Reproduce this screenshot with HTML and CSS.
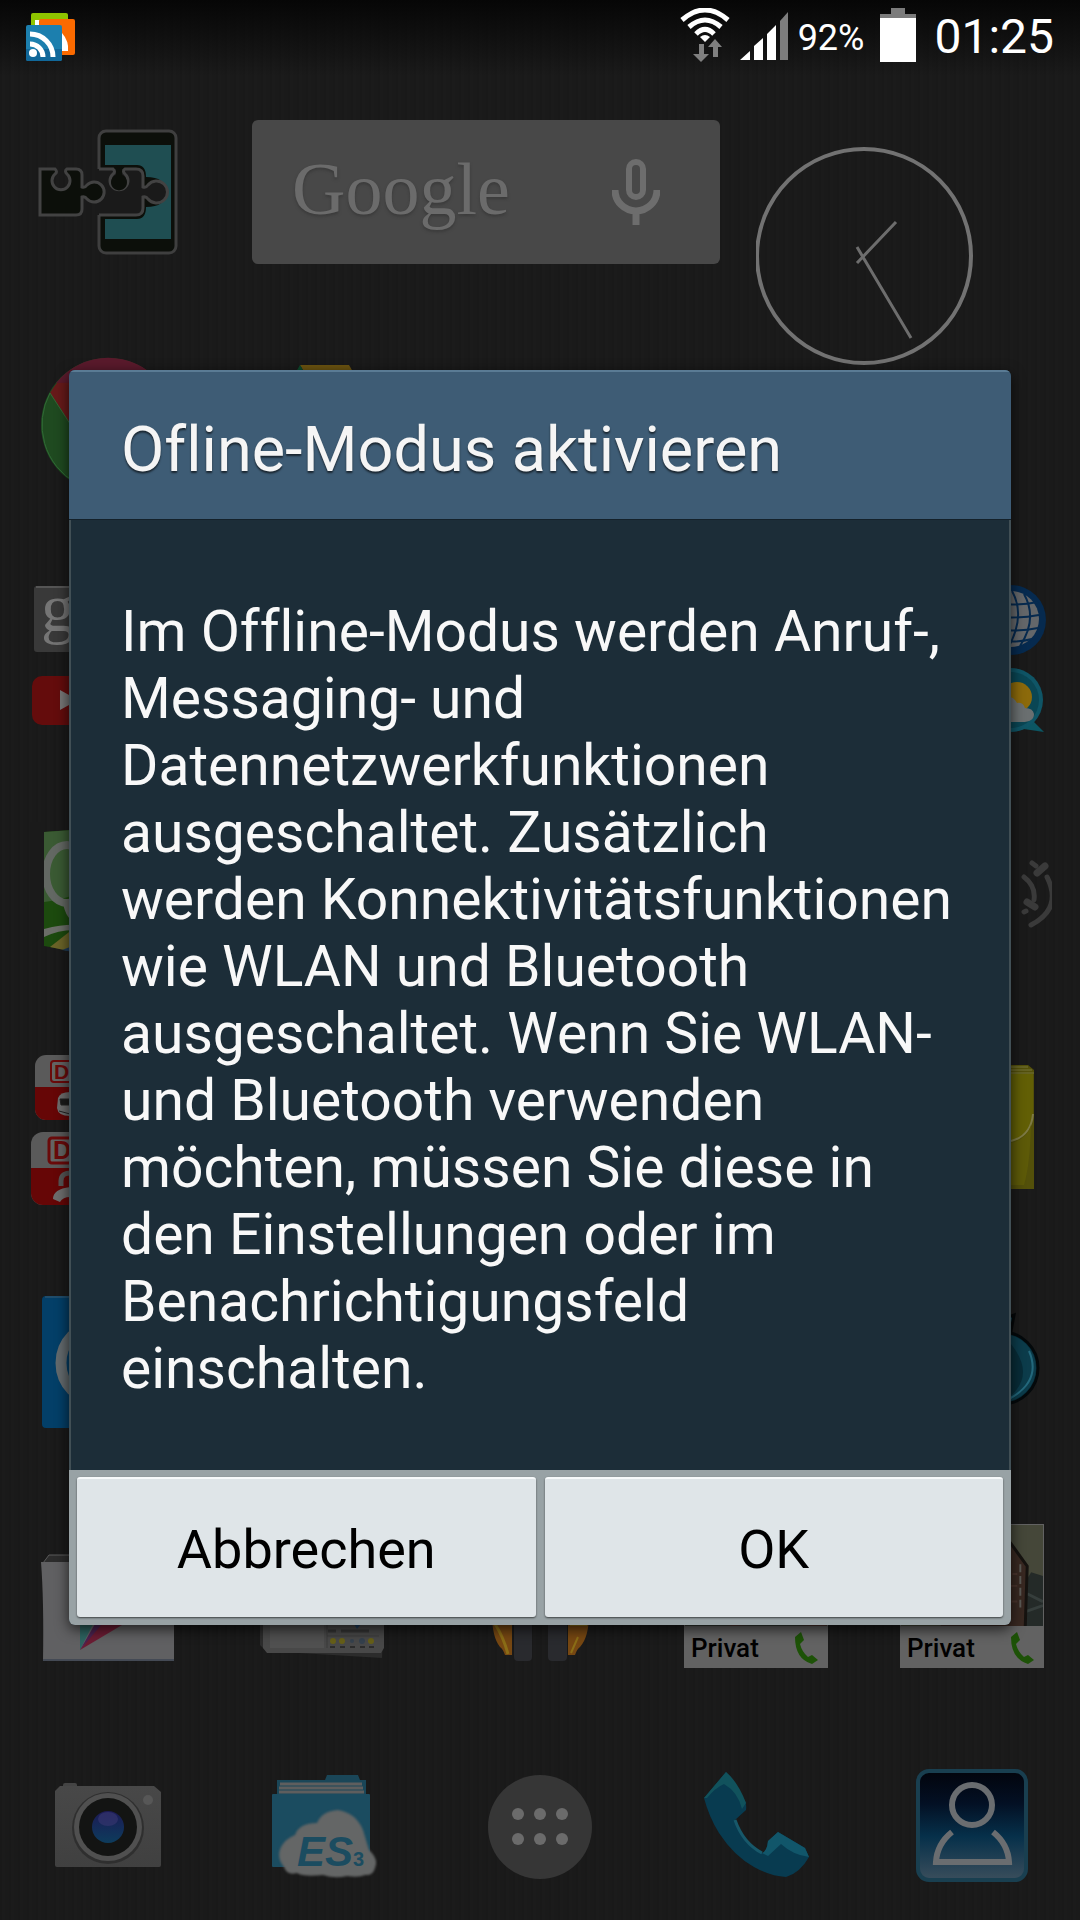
FILE: index.html
```html
<!DOCTYPE html>
<html lang="de">
<head>
  <meta charset="UTF-8" />
  <meta name="viewport" content="width=device-width, initial-scale=1.0" />
  <title>Offline-Modus</title>
  <link rel="stylesheet" href="styles.css">
</head>
<body>

  <header class="status">
    <svg class="feed" width="50" height="50" viewBox="0 0 50 50">
      <rect x="5" y="0" width="37" height="36" rx="2" fill="#8fc400"/>
      <rect x="9" y="7" width="5" height="8" fill="#fff"/>
      <rect x="13" y="6" width="36" height="36" rx="2" fill="#fb6a00"/>
      <path d="M36 20q7 8 6 18h-6z" fill="#fff"/>
      <rect x="0" y="12" width="36" height="36" rx="2" fill="#1c7fae"/>
      <path d="M0 36h36v10a2 2 0 0 1-2 2H2a2 2 0 0 1-2-2z" fill="#11689a"/>
      <circle cx="7" cy="40" r="4" fill="#fff"/>
      <path d="M4 31a13 13 0 0 1 13 13M4 21a23 23 0 0 1 23 23" fill="none" stroke="#fff" stroke-width="5"/>
    </svg>
    <div class="status-right">
      <svg width="50" height="54" viewBox="0 0 50 54">
        <g fill="none" stroke="#fff" stroke-width="5">
          <path d="M2 12Q25-8 48 12"/>
          <path d="M9 19Q25 5 41 19"/>
          <path d="M16 26Q25 17 34 26"/>
        </g>
        <path d="M20 29q5-4 10 0l-5 5z" fill="#fff"/>
        <path d="M19 36h5v10h5l-8 8-8-8h6zM33 49h5V39h4l-7-8-7 8h5z" fill="#808080"/>
      </svg>
      <svg width="48" height="50" viewBox="0 0 48 50">
        <path d="M0 48l10-9v9zM14 48V34l9-8v22zM27 48V22l9-9v35z" fill="#fff"/>
        <path d="M40 48V9l8-9v48z" fill="#7d7d7d"/>
      </svg>
      <span class="percent">92%</span>
      <svg width="36" height="54" viewBox="0 0 36 54">
        <path d="M11 0h14v6h11v5H0V6h11z" fill="#7b7b7b"/>
        <rect y="10" width="36" height="44" fill="#fff"/>
      </svg>
      <span class="time">01:25</span>
    </div>
  </header>

  <main class="home">
    <a class="app c1 r1" href="#" aria-label="Xposed">
      <svg viewBox="-8 -8 160 160">
        <rect x="63" y="11" width="77" height="122" rx="7" fill="#0c0f0a" stroke="#3f3f3f" stroke-width="3"/>
        <path d="M69 25h66v94H69V99h32q9 0 9-12 20 0 20-15t-20-15q0-12-9-12H69z" fill="#1f4e52"/>
        <path d="M60 49h40q7 0 7 7v11q3 1 5-2a11 11 0 1 1 0 14q-2-3-5-2v11q0 7-7 7H60z" fill="#1a1a1a"/>
        <path d="M63 49h14q3 3 0 5a9 9 0 1 0 12 0q-3-3 0-5h11q7 0 7 7v11q3 1 5-2a11 11 0 1 1 0 14q-2-3-5-2v11q0 7-7 7H63" fill="none" stroke="#424242" stroke-width="3"/>
        <path d="M80 48h6v7a8 8 0 1 1-6 0z" fill="#0c0f0a"/>
        <path d="M4 49h15q3 3 0 5a9 9 0 1 0 12 0q-3-3 0-5h9q6 0 6 6v12q3 1 5-2a10 10 0 1 1 0 14q-2-3-5-2v12q0 6-6 6H4z" fill="#0c0f0a" stroke="#424242" stroke-width="3"/>
      </svg>
    </a>

    <div class="search">
      <button class="google">Google</button>
      <button class="mic" aria-label="Sprachsuche">
        <svg width="48" height="66" viewBox="0 0 48 66">
          <rect x="17" y="3" width="14" height="35" rx="7" fill="none" stroke="#6d6d6d" stroke-width="6"/>
          <path d="M3 31a21 21 0 0 0 42 0M24 52v14" fill="none" stroke="#6d6d6d" stroke-width="7"/>
        </svg>
      </button>
    </div>

    <div class="clock">
      <svg width="220" height="220" viewBox="0 0 220 220">
        <circle cx="108" cy="109" r="107" fill="none" stroke="#727272" stroke-width="4"/>
        <path d="M101 116l39-41M101 100l54 91" stroke="#6d6d6d" stroke-width="3"/>
      </svg>
    </div>

    <a class="app c1 r2" href="#" aria-label="Chrome">
      <svg viewBox="-8 -8 160 160">
        <circle cx="72" cy="71" r="67" fill="#1f4a20"/>
        <path d="M72 70L42 82 14 39A67 67 0 0 1 130 37z" fill="#671a1a"/>
        <path d="M20 29A67 67 0 0 1 124 28H72z" fill="#5a1a2c"/>
        <path d="M42 82L14 39A67 67 0 0 0 40 129" fill="none" stroke="#2f6a35" stroke-width="1"/>
      </svg>
    </a>
    <a class="app c2 r2" href="#" aria-label="Drive">
      <svg viewBox="-8 -8 160 160">
        <path d="M48 11h49l44 76H92z" fill="#6b5310"/>
        <path d="M48 11L2 90l25 42 46-78z" fill="#0c4a2c"/>
      </svg>
    </a>

    <a class="app c1 r3" href="#" aria-label="Google Ordner">
      <svg viewBox="-8 -8 160 160">
        <rect x="-2" y="-2" width="66" height="66" rx="3" fill="#393939"/>
        <path d="M0-1h62" stroke="#555" stroke-width="2"/>
        <text x="5" y="43" class="g-letter">g</text>
        <rect x="-4" y="88" width="72" height="49" rx="10" fill="#640c0c"/>
        <path d="M24 102v20l18-10z" fill="#777"/>
      </svg>
    </a>
    <a class="app c5 r3" href="#" aria-label="Internet und Wetter">
      <svg viewBox="-8 -8 160 160">
        <circle cx="111" cy="32" r="35" fill="#062a4f"/>
        <circle cx="111" cy="31" r="28" fill="#64676a"/>
        <g fill="none" stroke="#062a4f" stroke-width="2">
          <path d="M84 14q30 5 54 0M82 27q30 5 57 0M84 40q30 5 54 0M90 51q24 5 42 0"/>
          <path d="M112 3q14 25-4 57M124 6q14 25-4 52M101 4q8 25-6 50"/>
        </g>
        <path d="M132 132l12 12-27-4z" fill="#0c5663"/>
        <circle cx="111" cy="112" r="32" fill="#0f5566"/>
        <circle cx="111" cy="112" r="28" fill="#0a4654"/>
        <circle cx="117" cy="109" r="15" fill="#8c6a0b"/>
        <path d="M96 126q-4-12 8-16 8-4 13 5 6-1 8 5 8 0 9 6 0 8-12 8h-20q-6-2-6-8z" fill="#6a6f70"/>
      </svg>
    </a>

    <a class="app c1 r4" href="#" aria-label="Maps">
      <svg viewBox="-8 -8 160 160">
        <path d="M8 10l56-4v128L8 124z" fill="#1c4a0e"/>
        <path d="M8 10l56-4v50q-20 20-56 24z" fill="#3a5a33"/>
        <ellipse cx="31" cy="52" rx="21" ry="29" fill="none" stroke="#636863" stroke-width="8"/>
        <rect x="-6" y="0" width="14" height="110" fill="#1a1a1a"/>
        <path d="M30 80q2 16 14 20" fill="none" stroke="#636863" stroke-width="6"/>
        <path d="M8 107q20-5 34-4v5q-18-1-34 7z" fill="#6b6e68"/>
        <path d="M14 125l28-22v28z" fill="#6b6428"/>
        <path d="M26 128l16-6v9z" fill="#1c3a5c"/>
      </svg>
    </a>
    <a class="app c5 r4" href="#" aria-label="Verbindung">
      <svg viewBox="-8 -8 160 160">
        <g fill="none" stroke="#3a3a3a" stroke-linecap="round">
          <path d="M147 55Q163 86 131 103M124 55Q136 64 134 78" stroke-width="5"/>
          <path d="M137 51l8-7M127 80l8 5" stroke-width="7"/>
          <path d="M132 41l4 3M124 90l2-1" stroke-width="5"/>
        </g>
      </svg>
    </a>

    <a class="app c1 r5" href="#" aria-label="DB Navigator und DB Tickets">
      <svg viewBox="-8 -8 160 160">
        <rect x="-1" y="-1" width="65" height="65" rx="11" fill="#5a5a5a"/>
        <path d="M-1 31h65v22a11 11 0 0 1-11 11H10A11 11 0 0 1-1 53z" fill="#660606"/>
        <rect x="15" y="5" width="36" height="21" rx="3" fill="#646464" stroke="#6a0a0a" stroke-width="2"/>
        <text x="18" y="23" class="db">DB</text>
        <path d="M22 42q2-6 12-6v24q-12 0-13-8z" fill="#6d6d6d"/>
        <path d="M24 43h10v6H25zM23 55l11 3" fill="#1a1a1a" stroke="#222" stroke-width="1"/>
        <rect x="-5" y="76" width="73" height="73" rx="12" fill="#5a5a5a"/>
        <path d="M-5 112h73v25a12 12 0 0 1-12 12H7a12 12 0 0 1-12-12z" fill="#660606"/>
        <rect x="13" y="82" width="40" height="25" rx="3" fill="#646464" stroke="#6a0a0a" stroke-width="3"/>
        <text x="17" y="103" class="db db-big">DB</text>
        <path d="M25 130v-5q0-9 12-8" fill="none" stroke="#555" stroke-width="5"/>
        <path d="M17 143q0-10 17-12v10q-7 0-10 5z" fill="#6d6d6d"/>
      </svg>
    </a>
    <a class="app c5 r5" href="#" aria-label="Notizen">
      <svg viewBox="-8 -8 160 160">
        <path d="M20 9h108l6 5v119H20z" fill="#53500a"/>
        <path d="M20 11h108M20 14h112M20 17h114" stroke="#77743a" stroke-width="1"/>
        <path d="M20 18h113v40q-2 22-22 27l-91 10z" fill="#625f05"/>
        <path d="M133 58q-2 22-22 27" fill="none" stroke="#7d7a45" stroke-width="2"/>
        <path d="M111 87q16-4 20-18-1 40-7 60h-13z" fill="#5d5a08"/>
      </svg>
    </a>

    <a class="app c1 r6" href="#" aria-label="Outlook">
      <svg viewBox="-8 -8 160 160">
        <rect x="6" y="6" width="132" height="132" rx="4" fill="#033f68"/>
        <path d="M9 7h126" stroke="#3d5c70" stroke-width="1"/>
        <ellipse cx="62" cy="73" rx="37" ry="38" fill="none" stroke="#636a6d" stroke-width="11"/>
      </svg>
    </a>
    <a class="app c5 r6" href="#" aria-label="Spiel">
      <svg viewBox="-8 -8 160 160">
        <path d="M106 28l8-3-3 16h-7z" fill="#0d4250" stroke="#040708" stroke-width="3"/>
        <circle cx="102" cy="78" r="36" fill="#082c38" stroke="#04090b" stroke-width="3"/>
        <path d="M102 44a34 34 0 0 1 0 68q42-26 0-68z" fill="#0c3c4b"/>
        <path d="M104 45q14 22-4 48l-8-40z" fill="#0c4759"/>
        <path d="M129 61q13 30-20 48" fill="none" stroke="#23687c" stroke-width="2"/>
      </svg>
    </a>

    <a class="app c1 r7" href="#" aria-label="Play Store">
      <svg viewBox="-8 -8 160 160">
        <path d="M13 31h118v8H7z" fill="#2c2c2c" stroke="#5a5a5a" stroke-width="1"/>
        <path d="M5 38h133v99H7q1-60-2-99z" fill="#606062"/>
        <path d="M7 136h131" stroke="#444a55" stroke-width="2"/>
        <path d="M44 60v66l20-40z" fill="#2d6360"/>
        <path d="M44 126l20-26h18l4 1z" fill="#6b1c33"/>
        <path d="M44 126l15-26h7z" fill="#4b2250"/>
      </svg>
    </a>
    <a class="app c2 r7" href="#" aria-label="News und Wetter">
      <svg viewBox="-8 -8 160 160">
        <path d="M8 40h126l-4 94L14 127l-6-6z" fill="#2c2c2c"/>
        <path d="M11 40h121v84l-3 5H15l-4-5z" fill="#484848"/>
        <rect x="18" y="60" width="54" height="64" fill="#505050"/>
        <path d="M75 60v64M75 112h52" stroke="#3a3a3a"/>
        <path d="M76 107h8M89 107h28" stroke="#343434" stroke-width="3"/>
        <path d="M102 100h7l-4 5z" fill="#1d3c5c"/>
        <g fill="#665f18"><circle cx="81" cy="117" r="3"/><circle cx="90" cy="117" r="3"/><circle cx="119" cy="117" r="3"/></g>
        <g fill="#34404d"><circle cx="100" cy="117" r="2"/><circle cx="110" cy="117" r="3"/></g>
        <path d="M78 123h5M88 123h5M98 123h5M108 123h5M117 123h5" stroke="#2b2b2b" stroke-width="2"/>
      </svg>
    </a>
    <a class="app c3 r7" href="#" aria-label="Musik">
      <svg viewBox="-8 -8 160 160">
        <path d="M24 90h20v41h-7q-2-6-5-8-8-10-8-33z" fill="#764712"/>
        <path d="M27 100q8 12 13 30" fill="none" stroke="#8b6d16" stroke-width="3"/>
        <path d="M121 90h-21v41h7q2-6 5-8 9-10 9-33z" fill="#764712"/>
        <path d="M102 101h17M103 129l7-16" fill="none" stroke="#8b6d16" stroke-width="2"/>
        <rect x="46" y="70" width="18" height="67" rx="4" fill="#292a2e"/>
        <rect x="80" y="70" width="19" height="67" rx="4" fill="#292a2e"/>
      </svg>
    </a>

    <a class="contact c4 r7" href="#">
      <svg class="photo" viewBox="0 0 144 103" preserveAspectRatio="none">
        <rect width="144" height="103" fill="#343a33"/>
        <path d="M0 101l30-2 20 3 40-3 54 4" stroke="#4a3330" stroke-width="2" fill="none"/>
      </svg>
      <span class="label">Privat
        <svg width="24" height="32" viewBox="0 0 24 32">
          <path d="M1 5L7 0l3 8-4 4q2 8 8 13l4-2 6 5-6 4Q1 27 1 5z" fill="#1d5207"/>
        </svg>
      </span>
    </a>
    <a class="contact c5 r7" href="#">
      <svg class="photo" viewBox="0 0 144 103" preserveAspectRatio="none">
        <rect width="144" height="103" fill="#454739"/>
        <path d="M126 58l6-10 12 4v51h-20z" fill="#242a28"/>
        <path d="M128 70l16 8M127 88l17-6" stroke="#363e3c" stroke-width="3"/>
        <path d="M60 60l48-46 20 28-2 61H40z" fill="#382821"/>
        <path d="M108 14l20 28-2 61" fill="none" stroke="#161310" stroke-width="3"/>
        <path d="M113 50h5M111 62h7M112 78h6" stroke="#4a342d" stroke-width="2"/>
        <path d="M121 40v46" stroke="#5b5a55" stroke-width="2" stroke-dasharray="8 4"/>
      </svg>
      <span class="label">Privat
        <svg width="24" height="32" viewBox="0 0 24 32">
          <path d="M1 5L7 0l3 8-4 4q2 8 8 13l4-2 6 5-6 4Q1 27 1 5z" fill="#1d5207"/>
        </svg>
      </span>
    </a>
  </main>

  <nav class="dock">
    <a class="app" href="#" aria-label="Kamera">
      <svg viewBox="-8 -8 160 160">
        <defs>
          <linearGradient id="lens" x1="0" y1="0" x2="0" y2="1">
            <stop offset="0" stop-color="#1c1a55"/>
            <stop offset="1" stop-color="#0d3c5c"/>
          </linearGradient>
          <linearGradient id="body" x1="0" y1="0" x2="0" y2="1">
            <stop offset="0" stop-color="#484848"/>
            <stop offset="1" stop-color="#404040"/>
          </linearGradient>
        </defs>
        <rect x="27" y="28" width="14" height="6" rx="2" fill="#444"/>
        <path d="M24 31h94l7 6v73q0 2-2 2H21q-2 0-2-2V36z" fill="url(#body)"/>
        <circle cx="72" cy="73" r="36" fill="#2f2f2f"/>
        <circle cx="72" cy="72" r="34" fill="#505050"/>
        <circle cx="72" cy="72" r="29" fill="#131413"/>
        <circle cx="72" cy="72" r="16" fill="url(#lens)"/>
        <ellipse cx="72" cy="64" rx="10" ry="7" fill="#35356d" opacity=".7"/>
        <circle cx="112" cy="45" r="5" fill="#575757"/>
      </svg>
    </a>
    <a class="app" href="#" aria-label="ES Datei Explorer">
      <svg viewBox="-8 -8 160 160">
        <path d="M25 25h48l2-5h31l2 5h6v20H25z" fill="#1a4658"/>
        <path d="M28 29h82M27 33h84M27 37h85" stroke="#5e5e5e" stroke-width="3"/>
        <rect x="20" y="39" width="98" height="73" rx="1" fill="#1b4c60"/>
        <path class="cloud" d="M32 112q-8-10-3-20 4-8 14-12 4-12 22-12 5-12 21-13 18 3 25 20l6 20q10 9 6 18-2 8-10 7-6 3-18 1-12 3-24-1-20 2-26-2-10 3-13-6z" fill="#646666"/>
        <text x="45" y="111" class="es">ES</text>
        <text x="101" y="111" class="es-three">3</text>
      </svg>
    </a>
    <a class="app" href="#" aria-label="Alle Apps">
      <svg viewBox="-8 -8 160 160">
        <circle cx="72" cy="72" r="52" fill="#363636"/>
        <g fill="#6b6b6b">
          <circle cx="50" cy="59" r="6"/><circle cx="72" cy="59" r="6"/><circle cx="94" cy="59" r="6"/>
          <circle cx="50" cy="84" r="6"/><circle cx="72" cy="84" r="6"/><circle cx="94" cy="84" r="6"/>
        </g>
      </svg>
    </a>
    <a class="app" href="#" aria-label="Telefon">
      <svg viewBox="-8 -8 160 160">
        <path d="M42 17L20 43Q25 62 35 78 50 101 70 112 86 121 102 122q14-4 23-20l-4-9-27-16-10 9q-1 12-6 12-18-8-27-33l11-10q1-8-3-12-8-16-17-26z" fill="#083b50"/>
        <path d="M42 17L20 43l3 0q8-10 17-14 14 8 18 25l4-6q-8-21-20-31z" fill="#11525c"/>
        <path d="M94 77l27 16 4 9q-16-2-28-13l-13 12-6-3q5-2 6-12z" fill="#11566a"/>
        <path d="M51 65q8 23 27 33" fill="none" stroke="#17586a" stroke-width="3"/>
      </svg>
    </a>
    <a class="app" href="#" aria-label="Kontakte">
      <svg viewBox="-8 -8 160 160">
        <defs>
          <linearGradient id="card" x1="0" y1="0" x2="0" y2="1">
            <stop offset="0" stop-color="#02040c"/>
            <stop offset=".3" stop-color="#031024"/>
            <stop offset=".6" stop-color="#06304a"/>
            <stop offset="1" stop-color="#3a4e5c"/>
          </linearGradient>
        </defs>
        <rect x="18" y="16" width="108" height="109" rx="11" fill="url(#card)" stroke="#193f50" stroke-width="4"/>
        <g fill="none" stroke="#6a6d70" stroke-width="6">
          <circle cx="72" cy="50" r="20"/>
          <path d="M52 77Q37 89 36 107h73q-1-18-16-30"/>
        </g>
      </svg>
    </a>
  </nav>

  <div class="overlay">
    <section class="dialog" role="dialog" aria-labelledby="titel">
      <h1 id="titel">Ofline-Modus aktivieren</h1>
      <p>Im Offline-Modus werden Anruf-, Messaging- und Datennetzwerkfunktionen ausgeschaltet. Zusätzlich werden Konnektivitätsfunktionen wie WLAN und Bluetooth ausgeschaltet. Wenn Sie WLAN- und Bluetooth verwenden möchten, müssen Sie diese in den Einstellungen oder im Benachrichtigungsfeld einschalten.</p>
      <div class="buttons">
        <button>Abbrechen</button>
        <button>OK</button>
      </div>
    </section>
  </div>

</body>
</html>
```

FILE: styles.css
```css
* { margin: 0; padding: 0; box-sizing: border-box; }

body {
  font-family: Roboto, "Noto Sans", sans-serif;
  font-variant-ligatures: none;
  min-height: 100vh;
  display: flex;
  flex-direction: column;
  color: white;
  background-color: #1a1a1a;
  background-image:
    linear-gradient(#060606, rgba(6, 6, 6, 0) 76px),
    repeating-linear-gradient(90deg, #191919 0 2px, #1b1b1b 2px 5px, #1a1a1a 5px 9px);
}

button {
  font-family: inherit;
  border: none;
  cursor: pointer;
}

svg { display: block; }

.status {
  height: 75px;
  display: flex;
  justify-content: space-between;
  align-items: flex-start;
  padding: 8px 26px 0 26px;
}

.feed { margin-top: 5px; }

.status-right {
  display: flex;
  align-items: flex-end;
  height: 54px;
}

.status-right svg { margin-right: 10px; }
.status-right .percent {
  font-size: 36px;
  line-height: 48px;
  margin-right: 16px;
}
.status-right .percent + svg { margin-right: 18px; }
.time {
  font-size: 48px;
  line-height: 50px;
}

/* Startbildschirm */
.home {
  flex-grow: 1;
  display: grid;
  grid-template-columns: repeat(10, 1fr);
  grid-template-rows: repeat(7, 1fr);
}

.c1 { grid-column: 1 / span 2; }
.c2 { grid-column: 3 / span 2; }
.c3 { grid-column: 5 / span 2; }
.c4 { grid-column: 7 / span 2; }
.c5 { grid-column: 9 / span 2; }
.r1 { grid-row: 1; }
.r2 { grid-row: 2; }
.r3 { grid-row: 3; }
.r4 { grid-row: 4; }
.r5 { grid-row: 5; }
.r6 { grid-row: 6; }
.r7 { grid-row: 7; }

.app {
  display: flex;
  align-items: center;
  justify-content: center;
}

.app svg {
  width: 160px;
  height: 160px;
}

.search {
  grid-column: 3 / span 5;
  grid-row: 1;
  align-self: center;
  height: 144px;
  margin: 0 36px;
  padding: 0 60px 0 40px;
  display: flex;
  align-items: center;
  justify-content: space-between;
  background-color: #484848;
  border-radius: 6px;
}

.search button { background: none; }

.search .google {
  padding-bottom: 6px;
  font-family: "Liberation Serif", serif;
  font-size: 74px;
  color: #6b6b6b;
  text-shadow: 0 2px 3px #3a3a3a;
}

.clock {
  grid-column: 8 / span 3;
  grid-row: 1 / span 2;
  padding-top: 72px;
}

.g-letter {
  font-family: "Liberation Serif", serif;
  font-size: 68px;
  fill: #757575;
}

.db {
  font-family: "Liberation Sans", sans-serif;
  font-weight: bold;
  font-size: 21px;
  fill: #6a0a0a;
}

.db-big { font-size: 25px; }

.cloud { filter: blur(1px); }

.es {
  font-family: "Liberation Sans", sans-serif;
  font-weight: bold;
  font-style: italic;
  font-size: 42px;
  fill: #1b4c60;
}

.es-three {
  font-family: "Liberation Sans", sans-serif;
  font-weight: bold;
  font-size: 20px;
  fill: #1b4c60;
}

.contact {
  width: 144px;
  height: 144px;
  place-self: center;
  display: flex;
  flex-direction: column;
  border: 1px solid #626262;
  background-color: #626262;
  color: black;
  text-decoration: none;
}

.photo {
  width: 100%;
  flex-grow: 1;
  min-height: 0;
}

.label {
  height: 41px;
  padding: 2px 9px 0 6px;
  display: flex;
  align-items: center;
  justify-content: space-between;
  font-size: 26px;
  font-weight: 500;
}

.dock {
  height: 207px;
  padding-top: 21px;
  display: grid;
  grid-template-columns: repeat(5, 1fr);
}

/* Dialog */
.overlay {
  position: fixed;
  inset: 0;
  padding: 75px 69px 0;
  display: flex;
  align-items: center;
}

.dialog {
  width: 100%;
  border-radius: 6px;
  background-color: #1c2d38;
  box-shadow: 0 4px 14px rgba(0, 0, 0, 0.7);
  overflow: hidden;
}

.dialog h1 {
  height: 150px;
  padding-left: 52px;
  line-height: 156px;
  font-size: 63px;
  font-weight: 400;
  color: #f5f5f5;
  background-color: #3e5c75;
  border-top: 2px solid #5a7b94;
  border-bottom: 1px solid #14212a;
  text-shadow: 0 2px 2px rgba(0, 0, 0, 0.6);
}

.dialog p {
  padding: 78px 50px 68px;
  font-size: 57px;
  line-height: 67px;
  color: #f8f8f8;
  border: solid #414f55;
  border-width: 0 2px;
}

.buttons {
  display: flex;
  gap: 9px;
  padding: 7px 8px 8px;
  background-color: #98a2a5;
}

.buttons button {
  flex: 1;
  height: 140px;
  padding-top: 2px;
  font-size: 54px;
  color: black;
  background-color: #dfe5e8;
  border-top: 2px solid #f6f9fa;
  border-radius: 3px;
  box-shadow: 0 1px 2px rgba(0, 0, 0, 0.6);
}
```
